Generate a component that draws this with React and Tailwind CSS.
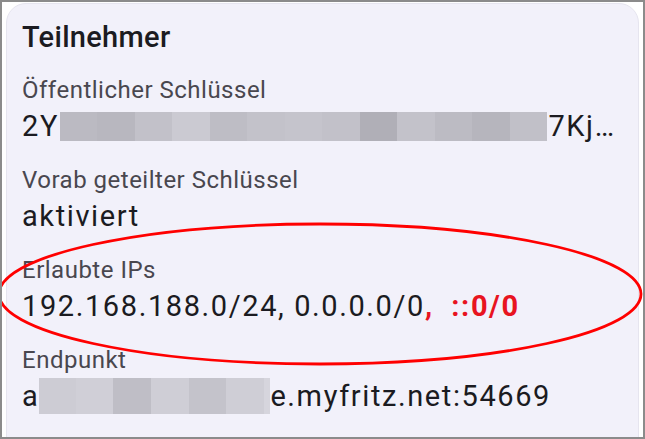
import React from 'react'

const keyBlocks = [
  '#bbbac2', '#b8b7bf', '#c2c1c9', '#cbcad2', '#bebdc5', '#c3c2ca', '#c5c4cc',
  '#c2c1c9', '#b0afb7', '#c3c2ca', '#bcbbc3', '#b6b5bd', '#c1c0c8',
]

const hostBlocks = ['#cdccd4', '#d0cfd7', '#bfbec6', '#cfced6', '#c4c3cb', '#cfced6', '#d6d5dd']

function Blur({ colors, w, className }) {
  return (
    <span className={`inline-flex align-middle ${className}`}>
      {colors.map((c, i) => (
        <span key={i} className="h-full" style={{ background: c, width: w[i] }} />
      ))}
    </span>
  )
}

function Field({ label, children }) {
  return (
    <div className="flex flex-col gap-[4px] pb-[22px]">
      <div className="text-[24px] leading-[28px] tracking-[0.5px] text-[#49474f]">{label}</div>
      <div className="text-[29px] leading-[36px] text-[#1b1b21] whitespace-nowrap tracking-[1.6px]">{children}</div>
    </div>
  )
}

export default function App() {
  return (
    <div
      className="relative h-[439px] w-[645px] overflow-hidden border-2 border-[#8b8b8b] bg-white"
      style={{ fontFamily: 'Roboto, "Liberation Sans", sans-serif' }}
    >
      <div className="mx-[4px] mt-[1px] h-[500px] rounded-t-[20px] border border-[#e6e5ef] bg-[#f2f1fa] px-[15px] pt-[15px]">
        <div className="text-[29px] leading-[36px] font-medium tracking-[0.3px] text-[#1b1b21] mb-[21px]">Teilnehmer</div>

        <Field label="Öffentlicher Schlüssel">
          <span className="flex items-center">
            2Y
            <Blur colors={keyBlocks} w={keyBlocks.map(() => '37.5px')} className="h-[29px] mx-[1px]" />
            7Kj…
          </span>
        </Field>

        <Field label="Vorab geteilter Schlüssel">aktiviert</Field>

        <Field label="Erlaubte IPs">
          192.168.188.0/24, 0.0.0.0/0
          <span className="font-bold text-[#e8141f]">,&nbsp;&nbsp;::0/0</span>
        </Field>

        <Field label="Endpunkt">
          <span className="flex items-center">
            a
            <Blur colors={hostBlocks} w={['37px', '37px', '38px', '38px', '37px', '38px', '6px']} className="h-[36px]" />
            e.myfritz.net:54669
          </span>
        </Field>
      </div>

      <svg className="pointer-events-none absolute left-0 top-0" width="645" height="439">
        <ellipse cx="318" cy="292" rx="321" ry="70" fill="none" stroke="#ff0000" strokeWidth="2.8" />
      </svg>
    </div>
  )
}
